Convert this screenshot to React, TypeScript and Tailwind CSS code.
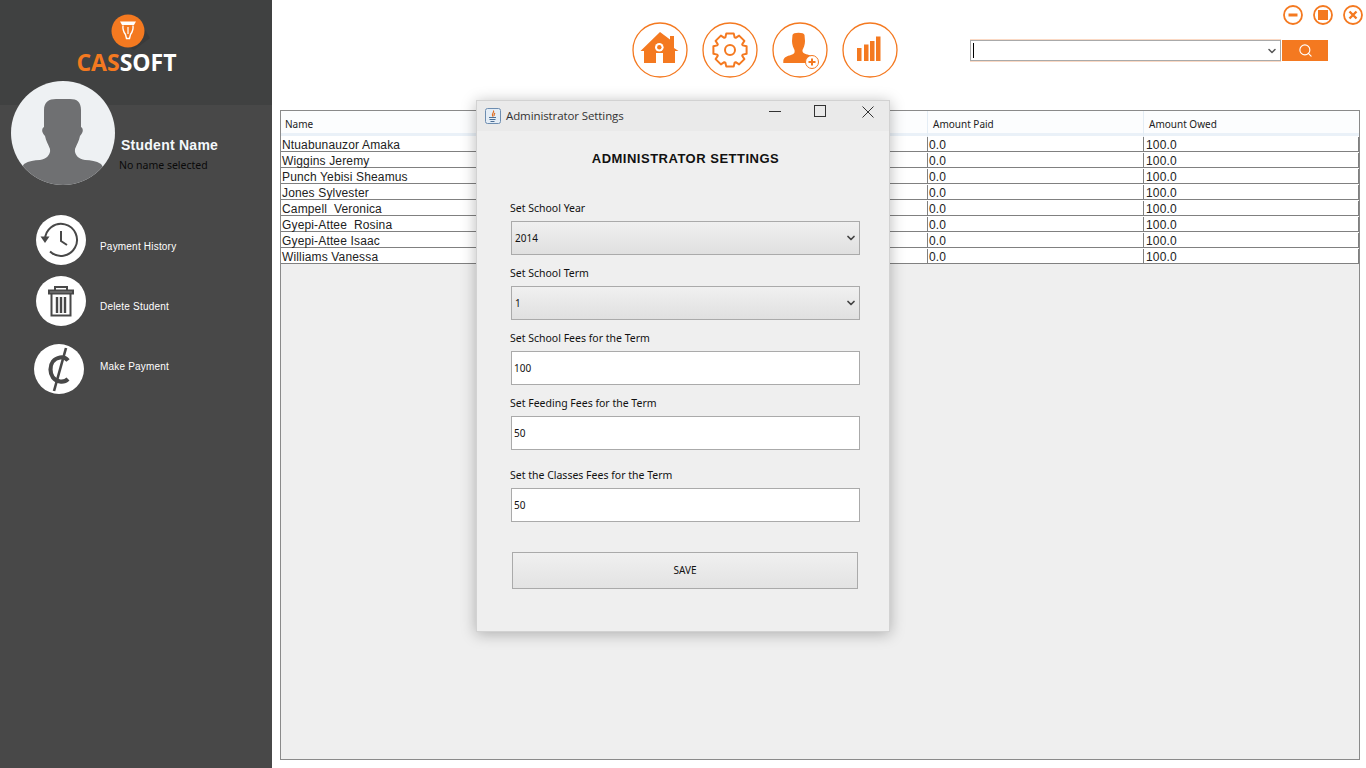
import { ChevronDown, Search } from "lucide-react";

const ORANGE = "#f47920";

const students = [
  "Ntuabunauzor Amaka",
  "Wiggins Jeremy",
  "Punch Yebisi Sheamus",
  "Jones Sylvester",
  "Campell  Veronica",
  "Gyepi-Attee  Rosina",
  "Gyepi-Attee Isaac",
  "Williams Vanessa",
];

// gear outline with 8 teeth, computed once
const gearPath = (() => {
  const pts: string[] = [];
  const cx = 28;
  const cy = 28;
  for (let i = 0; i < 8; i++) {
    const a = (i * Math.PI) / 4 - Math.PI / 2;
    const step = 0.2;
    const p = [
      [a - 0.39 + step * 0.2, 13.5],
      [a - step - 0.02, 17],
      [a + step + 0.02, 17],
      [a + 0.39 - step * 0.2, 13.5],
    ];
    p.forEach(([t, r]) => pts.push(`${(cx + r * Math.cos(t)).toFixed(1)} ${(cy + r * Math.sin(t)).toFixed(1)}`));
  }
  return "M" + pts.join("L") + "Z";
})();

function ToolCircle({ children }: { children: React.ReactNode }) {
  return (
    <div className="h-14 w-14 rounded-full">
      <svg viewBox="0 0 56 56" className="h-14 w-14">
        <circle cx="28" cy="28" r="27" fill="none" stroke={ORANGE} strokeWidth="1.3" />
        {children}
      </svg>
    </div>
  );
}

function WinBtn({ children }: { children: React.ReactNode }) {
  return (
    <svg viewBox="0 0 20 20" className="h-5 w-5">
      <circle cx="10" cy="10" r="9" fill="none" stroke={ORANGE} strokeWidth="1.8" />
      {children}
    </svg>
  );
}

function SideAction({ label, icon, className, labelClass }: { label: string; icon: React.ReactNode; className: string; labelClass: string }) {
  return (
    <div className={`flex items-center ${className}`}>
      <div className="h-[50px] w-[50px] rounded-full bg-white">{icon}</div>
      <span className={`text-[10px] tracking-[0.2px] text-white ${labelClass}`}>{label}</span>
    </div>
  );
}

function Field({ label, value, className, select }: { label: string; value: string; className: string; select?: boolean }) {
  return (
    <div className={className}>
      <div className="-ml-px h-[14px] text-[10.5px] leading-[14px] text-[#111] font-['Noto_Sans',sans-serif]">{label}</div>
      <div
        className={`mt-[6px] flex h-[34px] w-[349px] items-center justify-between border border-[#aaaaaa] pr-[2px] text-[10px] text-[#111] ${
          select ? "bg-gradient-to-b from-[#f0f0f0] to-[#e0e0e0] pl-[3px]" : "bg-white pl-[2px]"
        }`}
      >
        <span className="font-['Noto_Sans',sans-serif]">{value}</span>
        {select && <ChevronDown size={12} strokeWidth={3.5} color="#444" />}
      </div>
    </div>
  );
}

export default function App() {
  return (
    <div className="relative flex h-[768px] w-[1366px] overflow-hidden bg-white font-['Liberation_Sans',sans-serif]">
      {/* SIDEBAR */}
      <aside className="relative h-full w-[272px] shrink-0 bg-[#484848]">
        <div className="flex h-[105px] flex-col items-center bg-[#404141] pr-[19px] pt-[14px]">
          <svg viewBox="0 0 40 36" className="ml-[6px] h-[36px] w-[40px]">
            <path d="M12 30 L24 36 L40 24 L30 8Z" fill="#3a3a3a" />
            <circle cx="18" cy="17" r="16.5" fill={ORANGE} />
            <path d="M10 7.500h16l-2 3.500h-12z" fill="#fff" />
            <path d="M13 11.500c-.5 4 1 7 2.500 9l1 4h3l1-4c1.500-2 3-5 2.500-9" fill="none" stroke="#fff" strokeWidth="1.400" />
            <path d="M18 13v7" stroke="#fff" strokeWidth="1.200" />
          </svg>
          <div className="-mt-[1px] text-[23px] font-bold leading-[26px] font-['Open_Sans',sans-serif]">
            <span className="text-[#f47920]">CAS</span>
            <span className="text-white">SOFT</span>
          </div>
        </div>

        <div className="absolute left-[11px] top-[81px] h-[104px] w-[104px] overflow-hidden rounded-full bg-[#eef1f3]">
          <svg viewBox="0 0 104 104" className="h-[104px] w-[104px]">
            <path
              d="M33 29C33 21 38 18 45 18H59C66 18 70 21 70 29L70 46C73 48 72 52 69 55C68 60 66 63 64 68C63 74 68 78 74 79C80 79 85 80 90 83L104 104H0L13 83C18 80 23 79 29 79C35 78 40 74 39 68C37 63 35 60 34 55C31 52 30 48 33 46Z"
              fill="#6f7072"
            />
          </svg>
        </div>
        <div className="absolute left-[121px] top-[137px] text-[14px] font-bold leading-[16px] tracking-[0.25px] text-[#f4f8fc]">Student Name</div>
        <div className="absolute left-[119px] top-[158px] text-[10.5px] leading-[14px] text-[#0a0a0a] font-['Noto_Sans',sans-serif]">No name selected</div>

        <div className="pt-[110px]">
          <SideAction
            label="Payment History"
            className="ml-[36px] gap-[14px]"
            labelClass="mt-[12px]"
            icon={
              <svg viewBox="0 0 50 50" className="h-[50px] w-[50px]" fill="none" stroke="#484848" strokeWidth="2">
                <path d="M9 25a16 16 0 1 1 5 11.500" />
                <path d="M4.500 21.500h9l-4.500 6.500z" fill="#484848" stroke="none" />
                <path d="M25 16v10l6 4" strokeWidth="2" />
              </svg>
            }
          />
          <SideAction
            label="Delete Student"
            className="ml-[36px] mt-[11px] gap-[14px]"
            labelClass="mt-[10px]"
            icon={
              <svg viewBox="0 0 50 50" className="h-[50px] w-[50px]" fill="none" stroke="#484848" strokeWidth="2">
                <path d="M19 14v-3h12v3" />
                <path d="M13 14.500h24v3H13z" fill="#888" />
                <path d="M15.500 18v21.500h19V18" />
                <path d="M21 21v16M25 21v16M29 21v16" strokeWidth="2.400" />
              </svg>
            }
          />
          <SideAction
            label="Make Payment"
            className="ml-[34px] mt-[18px] gap-[16px]"
            labelClass="-mt-[6px]"
            icon={
              <svg viewBox="0 0 50 50" className="h-[50px] w-[50px]" fill="none" stroke="#484848">
                <path d="M34 16.500c-2-2.500-5-3.500-8-3-6 1-9.500 6-9.500 12s3.500 11 9.500 12c3 .5 6-.5 8-2.500" strokeWidth="4.200" />
                <path d="M32 4 20 47" strokeWidth="2.600" />
              </svg>
            }
          />
        </div>
      </aside>

      {/* MAIN */}
      <main className="flex h-full flex-1 flex-col">
        <header className="flex h-[110px] shrink-0">
          <div className="ml-[360px] mt-[22px] flex h-14 gap-[14px]">
            <ToolCircle>
              <path d="M28 10 38 17.500V14h4v12l4.500 3h-3.500v12H31V31h-7v10H12V29H8.500z" fill={ORANGE} />
              <circle cx="27.300" cy="25.300" r="4.300" fill="#fff" />
              <circle cx="27.300" cy="25.300" r="2.200" fill={ORANGE} />
            </ToolCircle>
            <ToolCircle>
              <path d={gearPath} fill="none" stroke={ORANGE} strokeWidth="2" strokeLinejoin="round" />
              <circle cx="28" cy="28" r="5" fill="none" stroke={ORANGE} strokeWidth="2" />
            </ToolCircle>
            <ToolCircle>
              <path
                d="M20.500 13C21 11.500 23 10.700 26.500 10.700S32 11.500 32.500 13L33 19C33 23 31.500 26 30.500 28C30 31 33 32 37 33C41 34 44.500 35.500 44.700 39V41H11.300V39C11.500 35.500 15 34 19 33C22 32 23 31 22.500 28C21.500 26 20 23 20 19Z"
                fill={ORANGE}
              />
              <circle cx="40" cy="40" r="6.500" fill="#fff" stroke={ORANGE} strokeWidth="1" />
              <path d="M40 36.500v7M36.500 40h7" stroke={ORANGE} strokeWidth="2" />
            </ToolCircle>
            <ToolCircle>
              <path d="M15 26h4.500v13H15zM22 22.500h4.500V39H22zM28 19h4.500v20H28zM34 14.500h4.500V39H34z" fill={ORANGE} />
            </ToolCircle>
          </div>

          <div className="ml-[72px] flex flex-1 flex-col">
            <div className="mt-[5px] flex h-5 justify-end gap-[10px] pr-[3px]">
              <WinBtn>
                <path d="M5.500 10h9" stroke={ORANGE} strokeWidth="3" />
              </WinBtn>
              <WinBtn>
                <rect x="5" y="5" width="10" height="10" fill={ORANGE} />
              </WinBtn>
              <WinBtn>
                <path d="M6.500 6.500l7 7M13.500 6.500l-7 7" stroke={ORANGE} strokeWidth="2.400" />
              </WinBtn>
            </div>
            <div className="mt-[15px] flex h-[21px] gap-[1px]">
              <div className="flex h-[21px] w-[311px] items-center justify-between border border-[#aaaaaa] bg-white pl-[2px] pr-[2px] shadow-[0_1px_0_#fbd9c4,0_-1px_0_#fbd9c4]">
                <div className="h-[15px] w-px bg-black" />
                <ChevronDown size={12} strokeWidth={3} color="#555" />
              </div>
              <div className="flex h-[21px] w-[46px] items-center justify-center bg-[#f47920]">
                <Search size={15} color="#fff" strokeWidth={1.800} />
              </div>
            </div>
          </div>
        </header>

        {/* TABLE */}
        <div className="ml-[8px] h-[650px] w-[1080px] border border-[#8a8a8a] bg-[#efefef]">
          <div className="grid h-[25px] grid-cols-[217px_214px_216px_216px_215px] border-b-[3px] border-[#eaf1f8] bg-[#fcfdfe] text-[10px] leading-[26px] text-[#222] font-['Noto_Sans',sans-serif]">
            <div className="border-r border-[#e4edf5] pl-[4px]">Name</div>
            <div className="border-r border-[#e4edf5]" />
            <div className="border-r border-[#e4edf5]" />
            <div className="border-r border-[#e4edf5] pl-[5px]">Amount Paid</div>
            <div className="pl-[5px]">Amount Owed</div>
          </div>
          {students.map((name) => (
            <div
              key={name}
              className="grid h-[16px] grid-cols-[217px_214px_216px_216px_215px] border-b border-[#808080] bg-white pt-px text-[12px] leading-[16px] tracking-[0.15px] text-[#222] whitespace-pre"
            >
              <div className="h-[15px] border-r border-[#808080] pl-[1px]">{name}</div>
              <div className="h-[15px] border-r border-[#808080]" />
              <div className="h-[15px] border-r border-[#808080]" />
              <div className="h-[15px] border-r border-[#808080] pl-[1px]">0.0</div>
              <div className="h-[15px] border-r border-[#808080] pl-[2px]">100.0</div>
            </div>
          ))}
        </div>
      </main>

      {/* DIALOG */}
      <div className="absolute left-[476px] top-[100px] h-[532px] w-[414px] border border-[#d2d2d2] bg-[#efefef] shadow-[0_2px_14px_rgba(0,0,0,0.28)]">
        <div className="relative flex h-[30px] items-center bg-[#eaeaea] pl-[8px]">
          <svg viewBox="0 0 16 16" className="h-4 w-4">
            <rect x="0.500" y="0.500" width="15" height="15" rx="2" fill="#e4edf6" stroke="#6d8db0" />
            <path d="M8.500 2.500c1 2-2 3-1 5 .3.6.8 1 .8 1M10 5c-1 1-1.500 1.500-.8 3" fill="none" stroke="#e06a1c" strokeWidth="1.100" />
            <path d="M4 9.500h7M4.500 11.500h6M5.500 13.500h4" stroke="#4c6f96" strokeWidth="1" />
          </svg>
          <span className="ml-[5px] text-[11.5px] leading-[16px] tracking-[-0.1px] text-[#333] font-['Open_Sans',sans-serif]">Administrator Settings</span>
          <div className="absolute right-[12px] top-0 flex h-[30px] items-start gap-0">
            <svg viewBox="0 0 112 30" className="h-[30px] w-[112px]" fill="none" stroke="#333" strokeWidth="1">
              <path d="M4 10.500h12" />
              <rect x="49.500" y="4.500" width="11" height="11" />
              <path d="M97.500 5.500l11 11M108.500 5.500l-11 11" />
            </svg>
          </div>
        </div>

        <div className="pl-[34px]">
          <div className="mt-[21px] w-[349px] text-center text-[13px] font-bold leading-[14px] tracking-[0.5px] text-[#111]">ADMINISTRATOR SETTINGS</div>
          <Field label="Set School Year" value="2014" select className="mt-[35px]" />
          <Field label="Set School Term" value="1" select className="mt-[11px]" />
          <Field label="Set School Fees for the Term" value="100" className="mt-[11px]" />
          <Field label="Set Feeding Fees for the Term" value="50" className="mt-[11px]" />
          <Field label="Set the Classes Fees for the Term" value="50" className="mt-[18px]" />
          <div className="ml-[1px] mt-[30px] flex h-[37px] w-[346px] items-center justify-center border border-[#aaaaaa] bg-gradient-to-b from-[#f0f0f0] to-[#e3e3e3] text-[10px] text-[#111] font-['Noto_Sans',sans-serif]">
            SAVE
          </div>
        </div>
      </div>
    </div>
  );
}
